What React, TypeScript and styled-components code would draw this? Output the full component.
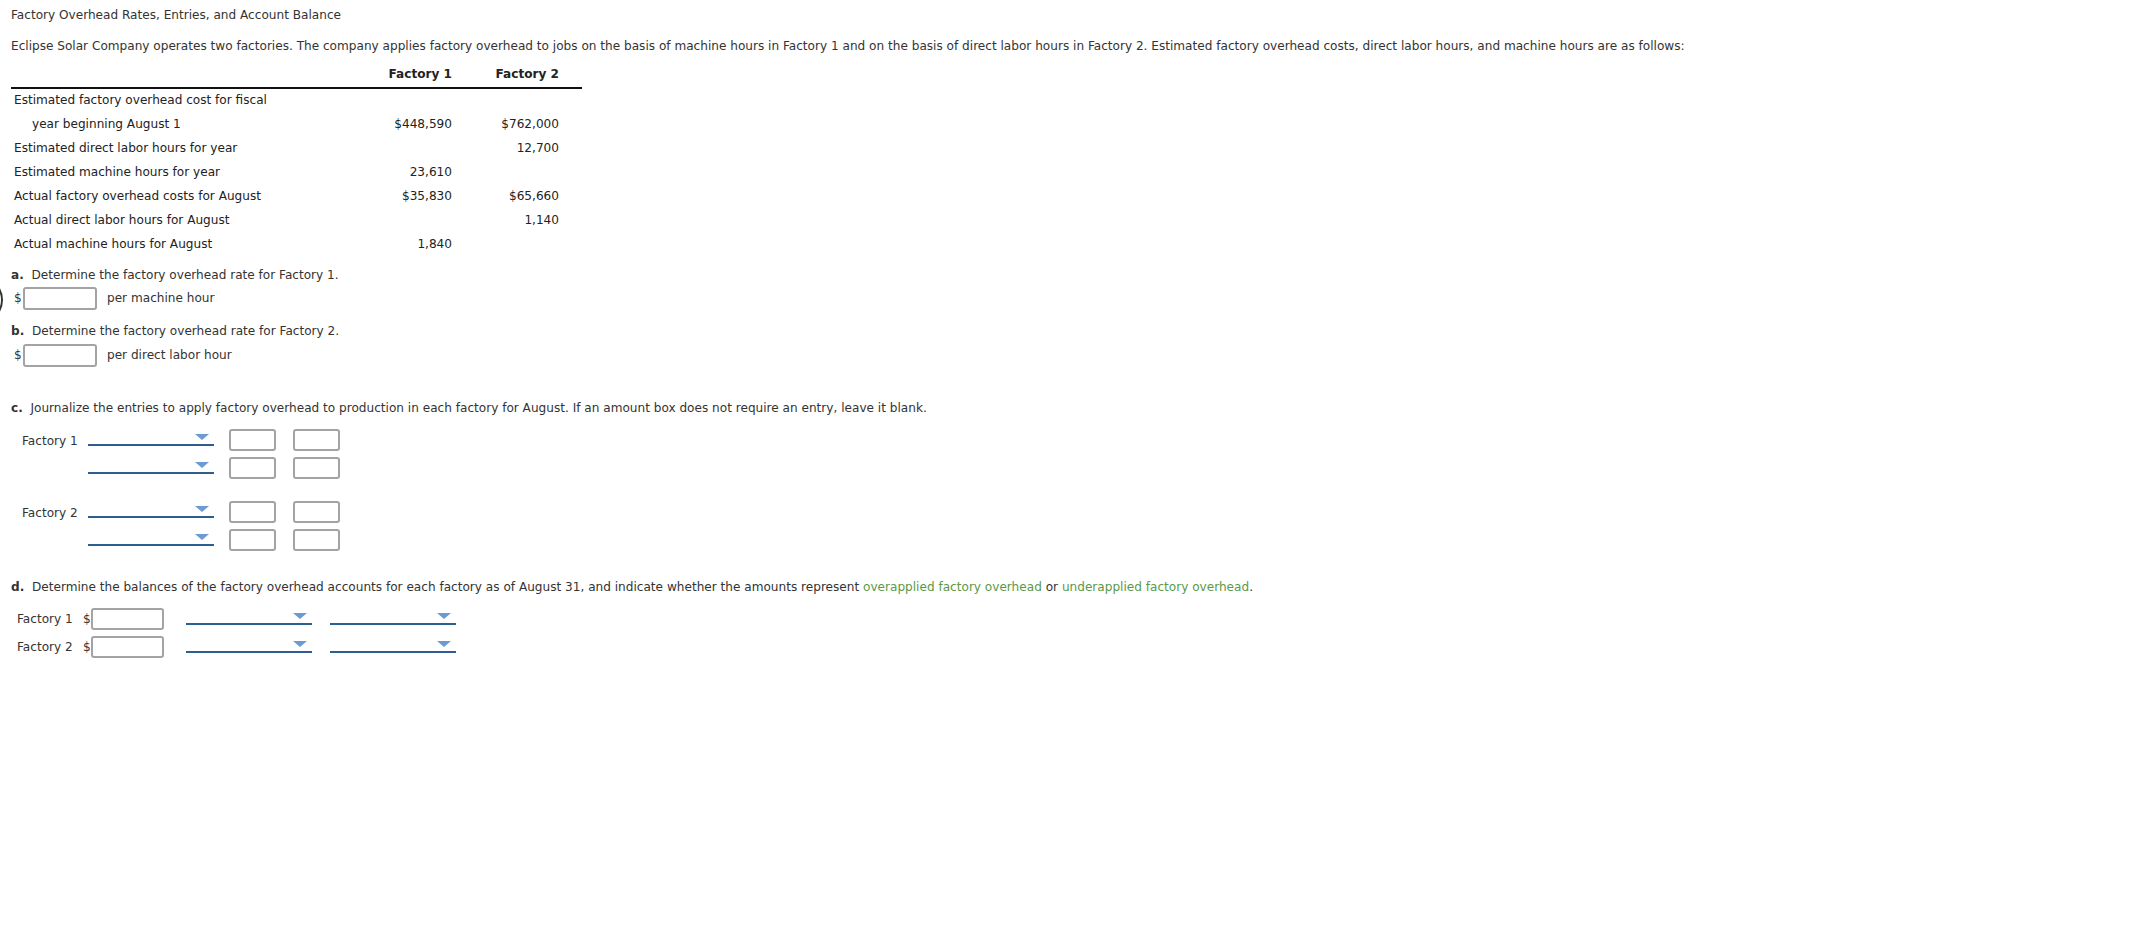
import React from "react";
import styled, { createGlobalStyle } from "styled-components";

const GlobalStyle = createGlobalStyle`
  html, body { margin: 0; padding: 0; background: #ffffff; }
  body {
    font-family: Verdana, "DejaVu Sans", sans-serif;
    font-size: 12.1px;
    color: #333333;
  }
  * { box-sizing: border-box; }
`;

const Page = styled.div`
  position: relative;
  padding: 8px 11px 40px 11px;
  width: 2154px;
  min-height: 946px;
`;

const EdgeCircle = styled.div`
  position: absolute;
  left: -45px;
  top: 276px;
  width: 48px;
  height: 48px;
  border-radius: 50%;
  border: 2px solid #333333;
`;

const Title = styled.div`
  line-height: 15px;
`;

const Paragraph = styled.p<{ $top: number }>`
  margin: ${(p) => p.$top}px 0 0 0;
  line-height: 15px;
`;

const Letter = styled.b`
  font-weight: bold;
`;

const Green = styled.span`
  color: #5a9a48;
`;

const DataTable = styled.table`
  margin-top: 8px;
  width: 571px;
  border-collapse: collapse;
  table-layout: fixed;
`;

const HeadCell = styled.th<{ $w?: number }>`
  width: ${(p) => (p.$w ? `${p.$w}px` : "auto")};
  height: 26px;
  padding: 0 23px 0 0;
  text-align: right;
  font-weight: bold;
  color: #222222;
  border-bottom: 2px solid #111111;
  line-height: 15px;
`;

const Row = styled.tr`
  height: 24px;
`;

const LabelCell = styled.td<{ $indent?: boolean }>`
  padding: 0 0 0 ${(p) => (p.$indent ? 21 : 3)}px;
  line-height: 15px;
  color: #222222;
  white-space: nowrap;
`;

const NumCell = styled.td`
  padding: 0 23px 0 0;
  text-align: right;
  line-height: 15px;
  color: #222222;
`;

const InlineRow = styled.div<{ $top: number }>`
  display: flex;
  align-items: center;
  margin-top: ${(p) => p.$top}px;
  height: 23px;
  padding-left: 3px;
`;

const Dollar = styled.span`
  width: 9px;
  line-height: 15px;
  color: #333333;
`;

const AmountInput = styled.input<{ $w: number; $h: number }>`
  width: ${(p) => p.$w}px;
  height: ${(p) => p.$h}px;
  border: 2px solid #a3a3a3;
  border-radius: 3px;
  background: #ffffff;
  padding: 0 3px;
  font: inherit;
  outline: none;
`;

const Unit = styled.span`
  margin-left: 10px;
  line-height: 15px;
`;

const Journal = styled.div`
  margin-top: 13px;
  padding-left: 11px;
  display: flex;
  flex-direction: column;
`;

const EntryGroup = styled.div<{ $top: number }>`
  display: flex;
  flex-direction: column;
  gap: 6px;
  margin-top: ${(p) => p.$top}px;
`;

const EntryRow = styled.div`
  display: flex;
  align-items: flex-start;
  height: 22px;
`;

const EntryLabel = styled.span`
  width: 66px;
  line-height: 15px;
  padding-top: 5px;
`;

const Dropdown = styled.div<{ $w: number }>`
  position: relative;
  width: ${(p) => p.$w}px;
  height: 17px;
  border-bottom: 2px solid #2e5d90;
  flex-shrink: 0;
`;

const Caret = styled.span`
  position: absolute;
  right: 5px;
  top: 5px;
  width: 0;
  height: 0;
  border-left: 7px solid transparent;
  border-right: 7px solid transparent;
  border-top: 6px solid #6b9bd2;
`;

const AmountGroup = styled.div`
  display: flex;
  gap: 17px;
  margin-left: 15px;
`;

const Balances = styled.div`
  margin-top: 13px;
  padding-left: 6px;
  display: flex;
  flex-direction: column;
  gap: 6px;
`;

const BalanceRow = styled.div`
  display: flex;
  align-items: flex-start;
  height: 22px;
`;

const BalanceLabel = styled.span`
  width: 66px;
  line-height: 15px;
  padding-top: 4px;
`;

const BalanceDollar = styled.span`
  width: 8px;
  line-height: 15px;
  padding-top: 4px;
`;

const DropPair = styled.div`
  display: flex;
  gap: 18px;
  margin-left: 22px;
`;

const rows: { label: string; indent?: boolean; f1: string; f2: string }[] = [
  { label: "Estimated factory overhead cost for fiscal", f1: "", f2: "" },
  { label: "year beginning August 1", indent: true, f1: "$448,590", f2: "$762,000" },
  { label: "Estimated direct labor hours for year", f1: "", f2: "12,700" },
  { label: "Estimated machine hours for year", f1: "23,610", f2: "" },
  { label: "Actual factory overhead costs for August", f1: "$35,830", f2: "$65,660" },
  { label: "Actual direct labor hours for August", f1: "", f2: "1,140" },
  { label: "Actual machine hours for August", f1: "1,840", f2: "" },
];

const Select = ({ w }: { w: number }) => (
  <Dropdown $w={w} role="combobox">
    <Caret />
  </Dropdown>
);

const Entry = ({ label }: { label: string }) => (
  <EntryRow>
    <EntryLabel>{label}</EntryLabel>
    <Select w={126} />
    <AmountGroup>
      <AmountInput $w={47} $h={22} />
      <AmountInput $w={47} $h={22} />
    </AmountGroup>
  </EntryRow>
);

const Balance = ({ label }: { label: string }) => (
  <BalanceRow>
    <BalanceLabel>{label}</BalanceLabel>
    <BalanceDollar>$</BalanceDollar>
    <AmountInput $w={73} $h={22} />
    <DropPair>
      <Select w={126} />
      <Select w={126} />
    </DropPair>
  </BalanceRow>
);

export default function App() {
  return (
    <Page>
      <GlobalStyle />
      <EdgeCircle />
      <Title>Factory Overhead Rates, Entries, and Account Balance</Title>
      <Paragraph $top={16}>
        Eclipse Solar Company operates two factories. The company applies factory overhead to jobs on the basis of
        machine hours in Factory 1 and on the basis of direct labor hours in Factory 2. Estimated factory overhead
        costs, direct labor hours, and machine hours are as follows:
      </Paragraph>
      <DataTable>
        <thead>
          <tr>
            <HeadCell />
            <HeadCell $w={107}>Factory 1</HeadCell>
            <HeadCell $w={107}>Factory 2</HeadCell>
          </tr>
        </thead>
        <tbody>
          {rows.map((r) => (
            <Row key={r.label}>
              <LabelCell $indent={r.indent}>{r.label}</LabelCell>
              <NumCell>{r.f1}</NumCell>
              <NumCell>{r.f2}</NumCell>
            </Row>
          ))}
        </tbody>
      </DataTable>

      <Paragraph $top={12}>
        <Letter>a.</Letter>&nbsp; Determine the factory overhead rate for Factory 1.
      </Paragraph>
      <InlineRow $top={4}>
        <Dollar>$</Dollar>
        <AmountInput $w={74} $h={23} />
        <Unit>per machine hour</Unit>
      </InlineRow>

      <Paragraph $top={14}>
        <Letter>b.</Letter>&nbsp; Determine the factory overhead rate for Factory 2.
      </Paragraph>
      <InlineRow $top={5}>
        <Dollar>$</Dollar>
        <AmountInput $w={74} $h={23} />
        <Unit>per direct labor hour</Unit>
      </InlineRow>

      <Paragraph $top={34}>
        <Letter>c.</Letter>&nbsp; Journalize the entries to apply factory overhead to production in each factory for
        August. If an amount box does not require an entry, leave it blank.
      </Paragraph>
      <Journal>
        <EntryGroup $top={0}>
          <Entry label="Factory 1" />
          <Entry label="" />
        </EntryGroup>
        <EntryGroup $top={22}>
          <Entry label="Factory 2" />
          <Entry label="" />
        </EntryGroup>
      </Journal>

      <Paragraph $top={29}>
        <Letter>d.</Letter>&nbsp; Determine the balances of the factory overhead accounts for each factory as of
        August 31, and indicate whether the amounts represent <Green>overapplied factory overhead</Green> or{" "}
        <Green>underapplied factory overhead</Green>.
      </Paragraph>
      <Balances>
        <Balance label="Factory 1" />
        <Balance label="Factory 2" />
      </Balances>
    </Page>
  );
}
